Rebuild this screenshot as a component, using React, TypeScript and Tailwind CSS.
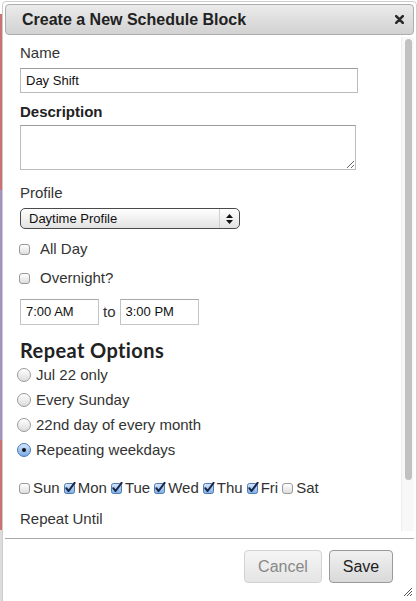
import React from "react";

function Box({ checked }: { checked?: boolean }) {
  if (checked) {
    return (
      <svg width="13" height="12" viewBox="0 0 13 12" className="shrink-0">
        <defs>
          <linearGradient id="cb" x1="0" y1="0" x2="0" y2="1">
            <stop offset="0" stopColor="#d6e8fb" />
            <stop offset="1" stopColor="#7eaee6" />
          </linearGradient>
        </defs>
        <rect x="0.5" y="1.5" width="10" height="10" rx="2" fill="url(#cb)" stroke="#4f78ad" />
        <path d="M2.3 6.2 L4.6 9 L10.6 0.8" fill="none" stroke="#18264a" strokeWidth="2" strokeLinecap="round" strokeLinejoin="round" />
      </svg>
    );
  }
  return (
    <span className="block w-[11px] h-[11px] shrink-0 rounded-[3px] border border-[#9a9a9a] bg-gradient-to-b from-white to-[#dedede]" />
  );
}

function Radio({ checked }: { checked?: boolean }) {
  return checked ? (
    <span className="flex items-center justify-center w-[14px] h-[14px] shrink-0 rounded-full border border-[#4a78b5] bg-gradient-to-b from-[#d5e7fb] to-[#78a9e4]">
      <span className="block w-[4px] h-[4px] rounded-full bg-[#111]" />
    </span>
  ) : (
    <span className="block w-[14px] h-[14px] shrink-0 rounded-full border border-[#9a9a9a] bg-gradient-to-b from-white to-[#dcdcdc]" />
  );
}

const days = [
  { d: "Sun", on: false },
  { d: "Mon", on: true },
  { d: "Tue", on: true },
  { d: "Wed", on: true },
  { d: "Thu", on: true },
  { d: "Fri", on: true },
  { d: "Sat", on: false },
];

export default function App() {
  return (
    <div className="w-[417px] h-[601px] overflow-hidden bg-white flex items-start font-['Liberation_Sans',Arial,sans-serif] text-[#333]">
      {/* page behind the dialog */}
      <div className="w-[2px] h-[601px] flex flex-col shrink-0">
        <div className="h-[14px] bg-white" />
        <div className="h-[176px] bg-[#c87272]" />
        <div className="h-[250px] bg-[#a294bd]" />
        <div className="h-[90px] bg-[#c87272]" />
        <div className="flex-1 bg-[#dcdcdc]" />
      </div>

      <div className="flex-1 h-[608px] mt-[1px] border border-[#cdcdcd] rounded-[4px] bg-white px-[2px] pt-[2px] flex flex-col">
        {/* Title bar */}
        <div className="h-[31px] shrink-0 rounded-[4px] border border-[#adadad] bg-gradient-to-b from-[#ebebeb] to-[#d2d2d2] flex items-center pl-[16px] pr-[9px]">
          <div className="flex-1 text-[16px] font-bold text-[#222] leading-none">Create a New Schedule Block</div>
          <svg width="9" height="9" viewBox="0 0 9 9">
            <path d="M1.2 1.2 L7.8 7.8 M7.8 1.2 L1.2 7.8" stroke="#2a2a2a" strokeWidth="2.6" strokeLinecap="round" />
          </svg>
        </div>

        {/* Body */}
        <div className="mt-[2px] h-[494px] shrink-0 flex overflow-hidden">
          <div className="flex-1 pl-[15px] pt-[7px] text-[15px] leading-[18px]">
            <div>Name</div>
            <div className="mt-[6px] w-[338px] h-[25px] border border-[#bcbcbc] border-t-[#9a9a9a] flex items-center pl-[5px] text-[13px] text-[#111]">
              Day Shift
            </div>

            <div className="mt-[10px] font-bold text-[#222]">Description</div>
            <textarea className="mt-[4px] block w-[336px] h-[45px] border border-[#bcbcbc] border-t-[#9a9a9a] resize outline-none" />

            <div className="mt-[14px]">Profile</div>
            <div className="mt-[6px] w-[220px] h-[21px] rounded-[5px] border border-[#4a4a4a] bg-gradient-to-b from-white via-[#f1f1f1] to-[#e2e2e2] flex items-center">
              <span className="flex-1 pl-[8px] text-[13px] text-[#111] leading-none">Daytime Profile</span>
              <span className="w-[20px] h-full border-l border-[#d0d0d0] flex flex-col items-center justify-center gap-[2px]">
                <svg width="7" height="4" viewBox="0 0 7 4"><path d="M0 4 L3.5 0 L7 4 Z" fill="#111" /></svg>
                <svg width="7" height="4" viewBox="0 0 7 4"><path d="M0 0 L3.5 4 L7 0 Z" fill="#111" /></svg>
              </span>
            </div>

            <div className="mt-[11px] flex items-center">
              <span className="ml-[-1px]"><Box /></span>
              <span className="ml-[10px]">All Day</span>
            </div>
            <div className="mt-[11px] flex items-center">
              <span className="ml-[-1px]"><Box /></span>
              <span className="ml-[10px]">Overnight?</span>
            </div>

            <div className="mt-[12px] flex items-center text-[13px]">
              <div className="w-[79px] h-[26px] border border-[#c4c4c4] border-t-[#a8a8a8] flex items-center pl-[5px] text-[#111]">7:00 AM</div>
              <span className="mx-[4px] text-[15px]">to</span>
              <div className="w-[79px] h-[26px] border border-[#c4c4c4] border-t-[#a8a8a8] flex items-center pl-[5px] text-[#111]">3:00 PM</div>
            </div>

            <div className="mt-[14px] font-['Lato',sans-serif] font-bold text-[20px] tracking-[0.4px] leading-[22px] text-[#222]">Repeat Options</div>
            <div className="mt-[5px] flex flex-col gap-[7px] ml-[-3px]">
              {[
                ["Jul 22 only", false],
                ["Every Sunday", false],
                ["22nd day of every month", false],
                ["Repeating weekdays", true],
              ].map(([t, c]) => (
                <div key={t as string} className="flex items-center">
                  <Radio checked={c as boolean} />
                  <span className="ml-[5px]">{t as string}</span>
                </div>
              ))}
            </div>

            <div className="mt-[20px] flex items-center ml-[-1px]">
              {days.map((x, i) => (
                <div key={x.d} className={`flex items-center ${i > 0 ? "ml-[4px]" : ""}`}>
                  <span className="w-[14px] flex">
                    <Box checked={x.on} />
                  </span>
                  <span>{x.d}</span>
                </div>
              ))}
            </div>

            <div className="mt-[13px]">Repeat Until</div>
          </div>

          {/* scrollbar */}
          <div className="w-[13px] shrink-0 bg-[#f8f8f8] border-l border-[#ececec] pt-[2px] flex justify-center">
            <div className="w-[7px] h-[441px] rounded-full bg-[#c1c1c1]" />
          </div>
        </div>

        {/* Footer */}
        <div className="mt-[7px] border-t border-[#a9a9a9] pt-[11px] pr-[21px] flex justify-end gap-[7px]">
          <button className="w-[78px] h-[33px] rounded-[4px] border border-[#d2d2d2] bg-gradient-to-b from-[#f5f5f5] to-[#e5e5e5] text-[16px] text-[#888]">
            Cancel
          </button>
          <button className="w-[64px] h-[33px] rounded-[4px] border border-[#9a9a9a] bg-gradient-to-b from-[#f1f1f1] to-[#d9d9d9] text-[16px] text-[#222]">
            Save
          </button>
        </div>
        <div className="flex justify-end pr-[1px] mt-[3px]">
          <svg width="11" height="11" viewBox="0 0 11 11">
            <path d="M10 2 L2 10 M10 5 L5 10 M10 8 L8 10" stroke="#555" strokeWidth="1" />
          </svg>
        </div>
      </div>
    </div>
  );
}
